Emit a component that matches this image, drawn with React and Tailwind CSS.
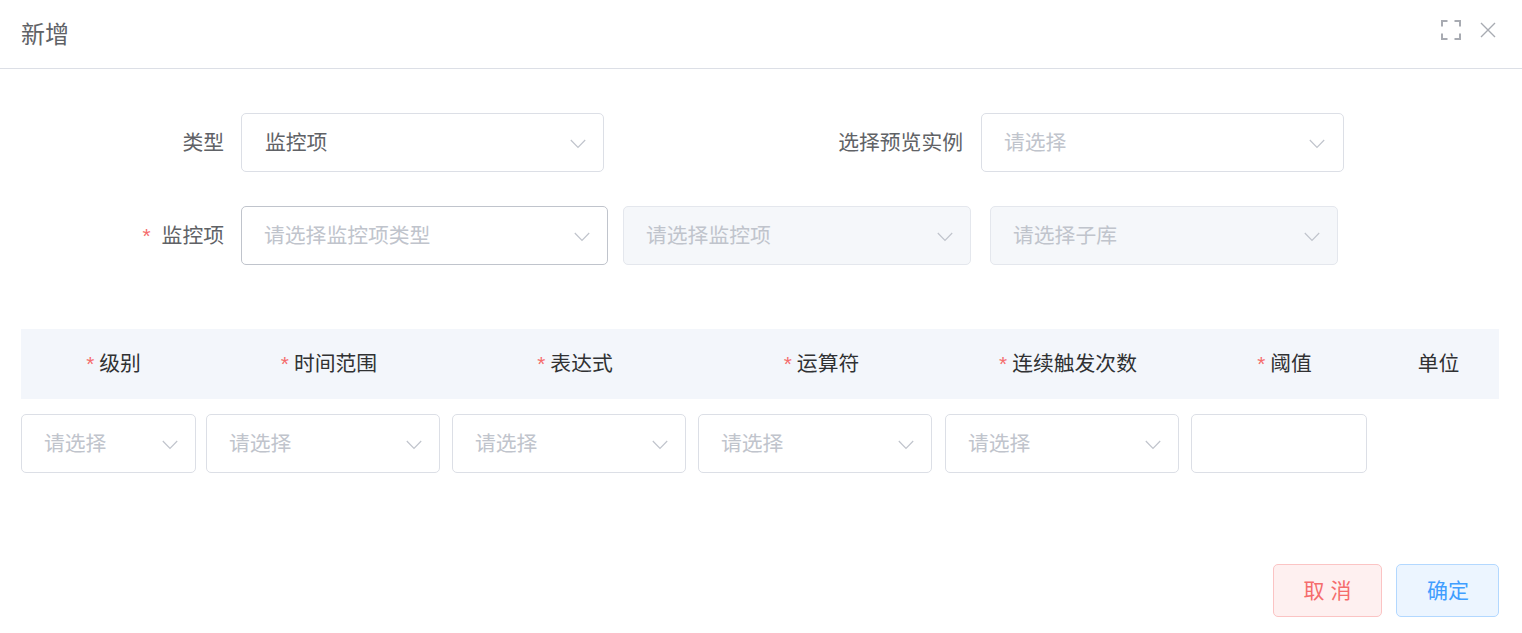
import React from "react";

const FONT = "font-['Liberation_Sans','Noto_Sans_CJK_SC',sans-serif]";

function Chevron({ className = "" }) {
  return (
    <svg width="16" height="10" viewBox="0 0 16 10" fill="none" className={className}>
      <path d="M0.8 1 L8 8.4 L15.2 1" stroke="#c0c4cc" strokeWidth="1.2" />
    </svg>
  );
}

function Select({ text, value, width, border = "border-[#dcdfe6]", disabled = false, arrow = "pr-[17px]" }) {
  return (
    <div
      className={`h-[59px] rounded-[5px] border flex items-center justify-between ${value ? "pl-[23px]" : "pl-[22px]"} ${arrow} ${width} ${border} ${
        disabled ? "bg-[#f5f7fa]" : "bg-white"
      }`}
    >
      <span className={`text-[20.8px] leading-[31px] ${value ? "text-[#606266]" : "text-[#c0c4cc]"}`}>{text}</span>
      <Chevron className="mt-[3px]" />
    </div>
  );
}

function Req({ children, gap = "mr-[5px]" }) {
  return (
    <span className="whitespace-nowrap">
      <span className={`text-[#f56c6c] ${gap}`}>*</span>
      {children}
    </span>
  );
}

export default function App() {
  return (
    <div className={`${FONT} w-[1522px] h-[633px] bg-white overflow-hidden`}>
      <header className="h-[69px] border-b border-[#dcdfe6] flex items-start justify-between pl-[21px] pr-[26px]">
        <h1 className="text-[24px] leading-[34px] mt-[18px] text-[#606266]">新增</h1>
        <div className="flex items-center gap-[19px] mt-[20px]">
          <svg width="20" height="20" viewBox="0 0 20 20" fill="none" stroke="#a8abb2" strokeWidth="2">
            <path d="M1 6.5V1H6.5M13.5 1H19V6.5M19 13.5V19H13.5M6.5 19H1V13.5" />
          </svg>
          <svg width="16" height="16" viewBox="0 0 16 16" fill="none" stroke="#a8abb2" strokeWidth="1.4">
            <path d="M1 1L15 15M15 1L1 15" />
          </svg>
        </div>
      </header>

      <section className="pt-[44px]">
        <div className="flex items-center">
          <label className="w-[224px] text-right text-[20.8px] leading-[31px] mb-[1px] text-[#606266]">类型</label>
          <div className="ml-[17px]">
            <Select text="监控项" value width="w-[363px]" />
          </div>
          <label className="w-[359px] text-right text-[20.8px] leading-[31px] mb-[1px] text-[#606266]">选择预览实例</label>
          <div className="ml-[18px]">
            <Select text="请选择" width="w-[363px]" arrow="pr-[18px]" />
          </div>
        </div>

        <div className="flex items-center mt-[34px]">
          <label className="w-[224px] text-right text-[20.8px] leading-[31px] mb-[1px] text-[#606266]">
            <Req gap="mr-[11px]">监控项</Req>
          </label>
          <div className="ml-[17px]">
            <Select text="请选择监控项类型" width="w-[367px]" border="border-[#c0c4cc]" />
          </div>
          <div className="ml-[15px]">
            <Select text="请选择监控项" width="w-[348px]" border="border-[#e4e7ed]" disabled />
          </div>
          <div className="ml-[19px]">
            <Select text="请选择子库" width="w-[348px]" border="border-[#e4e7ed]" disabled />
          </div>
        </div>
      </section>

      <section className="mt-[64px] mx-[21px] w-[1478px]">
        <div className="grid grid-cols-[185px_246px_246px_247px_246px_187px_121px] h-[70px] items-center bg-[#f3f6fb] text-[20.8px] leading-[30px] text-[#303133] text-center">
          <div><Req>级别</Req></div>
          <div><Req>时间范围</Req></div>
          <div><Req>表达式</Req></div>
          <div><Req>运算符</Req></div>
          <div><Req>连续触发次数</Req></div>
          <div><Req>阈值</Req></div>
          <div>单位</div>
        </div>
        <div className="grid grid-cols-[185px_246px_246px_247px_246px_187px_121px] mt-[15px]">
          <Select text="请选择" width="w-[175px]" />
          <Select text="请选择" width="w-[234px]" />
          <Select text="请选择" width="w-[234px]" />
          <Select text="请选择" width="w-[234px]" />
          <Select text="请选择" width="w-[234px]" />
          <div className="h-[59px] w-[176px] rounded-[5px] border border-[#dcdfe6] bg-white" />
        </div>
      </section>

      <footer className="mt-[91px] pr-[23px] flex justify-end gap-[14px]">
        <button className="w-[109px] h-[53px] rounded-[5px] border border-[#fbc4c4] bg-[#fef0f0] text-[21px] text-[#f56c6c]">
          取 消
        </button>
        <button className="w-[103px] h-[53px] rounded-[5px] border border-[#b3d8ff] bg-[#ecf5ff] pl-[1px] text-[21px] text-[#409eff]">
          确定
        </button>
      </footer>
    </div>
  );
}
